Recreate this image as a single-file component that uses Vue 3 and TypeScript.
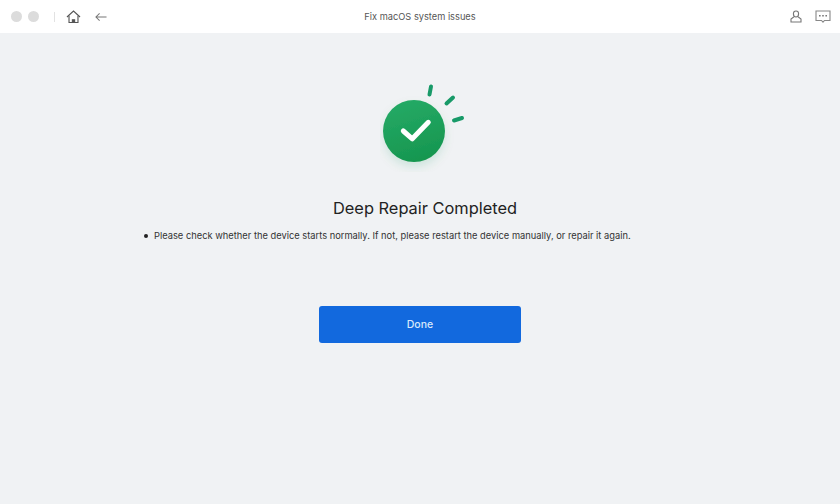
<template>
  <div class="window">
    <header class="titlebar">
      <div class="left">
        <span class="dot"></span>
        <span class="dot second"></span>
        <span class="sep"></span>
        <svg class="home" width="15" height="14" viewBox="0 0 16 15" fill="none" stroke="#555" stroke-width="1.2">
          <path d="M1 7.5 8 1.2l7 6.3" />
          <path d="M3.2 6.2V13.4h9.600V6.200" />
          <path d="M6.800 13.400v-3h2.400v3" fill="#555" />
        </svg>
        <svg class="back" width="12" height="10" viewBox="0 0 13 10" fill="none" stroke="#777" stroke-width="1.100">
          <path d="M12.500 5H1M5 1 1 5l4 4" />
        </svg>
      </div>
      <div class="title">Fix macOS system issues</div>
      <div class="right">
        <svg class="user" width="12" height="13" viewBox="0 0 12 13" fill="none" stroke="#777" stroke-width="1.100">
          <path d="M6 1c1.700 0 2.600 1.200 2.600 2.800S7.700 7 6 7 3.400 5.400 3.400 3.800 4.300 1 6 1Z" />
          <path d="M4 6.800 1 9v3h10V9L8 6.800" />
        </svg>
        <svg class="chat" width="16" height="14" viewBox="0 0 16 14" fill="none">
          <path d="M1 1h14v9.500H9.500L8 12.200 6.500 10.500H1Z" stroke="#888" stroke-width="1.100" />
          <path d="M4 5.800h1.600M7.200 5.800h1.600M10.400 5.800H12" stroke="#777" stroke-width="1.500" />
        </svg>
      </div>
    </header>

    <main class="content">
      <svg class="badge" width="90" height="90" viewBox="0 0 90 90" fill="none">
        <defs>
          <linearGradient id="ball" x1="0.3" y1="0" x2="0.6" y2="1">
            <stop offset="0" stop-color="#25aa66" />
            <stop offset="1" stop-color="#16964f" />
          </linearGradient>
          <filter id="soft" x="-40%" y="-40%" width="180%" height="180%">
            <feDropShadow dx="0" dy="5" stdDeviation="5" flood-color="#1a8f55" flood-opacity="0.14" />
          </filter>
        </defs>
        <circle cx="34" cy="49" r="31" fill="url(#ball)" filter="url(#soft)" />
        <path d="M23.300 49 32.300 56.800 48.300 40.300" stroke="#fff" stroke-width="5" stroke-linecap="round" stroke-linejoin="round" />
        <path d="M51 4.500 49.500 12.500M73 15.500 66.500 21.500M82 36 74 38.500" stroke="#189a68" stroke-width="4" stroke-linecap="round" />
      </svg>
      <h1>Deep Repair Completed</h1>
      <p class="note"><span class="bullet"></span>Please check whether the device starts normally. If not, please restart the device manually, or repair it again.</p>
      <button class="done">Done</button>
    </main>
  </div>
</template>

<script setup lang="ts">
</script>

<style>
html, body {
  margin: 0;
  background: #f0f2f4;
}
</style>

<style scoped>
.window {
  width: 840px;
  height: 504px;
  overflow: hidden;
  background: #f0f2f4;
  font-family: "Inter", "Liberation Sans", sans-serif;
  display: flex;
  flex-direction: column;
}

.titlebar {
  height: 33px;
  background: #fff;
  display: flex;
  align-items: center;
  position: relative;
  flex: none;
}

.left {
  display: flex;
  align-items: center;
  padding-left: 11px;
}

.dot {
  width: 11px;
  height: 11px;
  border-radius: 50%;
  background: #dcdcdc;
}

.dot.second {
  margin-left: 6px;
}

.sep {
  width: 1px;
  height: 10px;
  background: #e2e2e2;
  margin-left: 15px;
}

.home {
  margin-left: 11px;
}

.back {
  margin-left: 14px;
}

.title {
  position: absolute;
  left: 0;
  right: 0;
  text-align: center;
  font-size: 9.250px;
  color: #555;
}

.right {
  margin-left: auto;
  display: flex;
  align-items: center;
  padding-right: 9px;
}

.chat {
  margin-left: 13px;
}

.content {
  flex: 1;
  display: flex;
  flex-direction: column;
  align-items: center;
}

.badge {
  margin-top: 49px;
  margin-left: 10px;
}

h1 {
  margin: 24px 0 0 10px;
  font-size: 16.400px;
  line-height: 24px;
  font-weight: 400;
  color: #222;
}

.note {
  align-self: flex-start;
  margin: 9px 0 0 144px;
  font-size: 9.320px;
  line-height: 14px;
  color: #333;
  display: flex;
  align-items: center;
  white-space: nowrap;
}

.bullet {
  width: 4px;
  height: 4px;
  border-radius: 50%;
  background: #222;
  margin-right: 6px;
}

.done {
  margin-top: 63px;
  width: 202px;
  height: 37px;
  border: none;
  border-radius: 3px;
  background: #1269de;
  color: #d8e8fb;
  font-family: inherit;
  font-size: 10.500px;
  font-weight: 500;
}
</style>
